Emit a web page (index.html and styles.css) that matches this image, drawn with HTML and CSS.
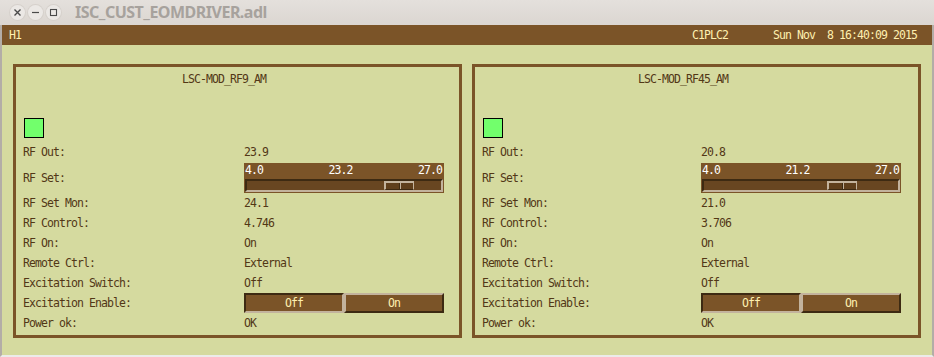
FILE: index.html
```html
<!DOCTYPE html>
<html>
<head>
<meta charset="utf-8">
<title>ISC_CUST_EOMDRIVER.adl</title>
<link rel="stylesheet" href="styles.css">
</head>
<body>
<div class="window">
  <div class="titlebar">
    <div class="wbtns">
      <span class="wbtn"><svg width="15" height="15" viewBox="0 0 15 15"><path d="M4.5 4.5 L10.5 10.5 M10.5 4.5 L4.5 10.5" stroke="#4a4a4a" stroke-width="1.4" fill="none"/></svg></span>
      <span class="wbtn"><svg width="15" height="15" viewBox="0 0 15 15"><path d="M4 7.5 H11" stroke="#4a4a4a" stroke-width="1.2" fill="none"/></svg></span>
      <span class="wbtn"><svg width="15" height="15" viewBox="0 0 15 15"><rect x="4.5" y="4.5" width="6" height="6" stroke="#4a4a4a" stroke-width="1.1" fill="none"/></svg></span>
    </div>
    <div class="wtitle">ISC_CUST_EOMDRIVER.adl</div>
  </div>
  <div class="frame">
    <div class="header">
      <span class="hname">H1</span>
      <span class="hspacer"></span>
      <span class="hhost">C1PLC2</span>
      <span class="hdate">Sun Nov  8 16:40:09 2015</span>
    </div>
    <div class="content">
      <div class="panel">
        <div class="ptitle">LSC-MOD_RF9_AM</div>
        <div class="led"></div>
        <div class="rows">
          <div class="row"><span>RF Out:</span><span>23.9</span></div>
          <div class="row row-slider"><span>RF Set:</span>
            <div class="slider">
              <div class="slabels"><span>4.0</span><span>23.2</span><span>27.0</span></div>
              <div class="trough"><div class="thumb" style="margin-left:137px"><span></span><span></span></div></div>
            </div>
          </div>
          <div class="row"><span>RF Set Mon:</span><span>24.1</span></div>
          <div class="row"><span>RF Control:</span><span>4.746</span></div>
          <div class="row"><span>RF On:</span><span>On</span></div>
          <div class="row"><span>Remote Ctrl:</span><span>External</span></div>
          <div class="row"><span>Excitation Switch:</span><span>Off</span></div>
          <div class="row"><span>Excitation Enable:</span>
            <div class="toggle"><span class="btn pressed">Off</span><span class="btn raised">On</span></div>
          </div>
          <div class="row"><span>Power ok:</span><span>OK</span></div>
        </div>
      </div>
      <div class="panel panel-right">
        <div class="ptitle">LSC-MOD_RF45_AM</div>
        <div class="led"></div>
        <div class="rows">
          <div class="row"><span>RF Out:</span><span>20.8</span></div>
          <div class="row row-slider"><span>RF Set:</span>
            <div class="slider">
              <div class="slabels"><span>4.0</span><span>21.2</span><span>27.0</span></div>
              <div class="trough"><div class="thumb" style="margin-left:123px"><span></span><span></span></div></div>
            </div>
          </div>
          <div class="row"><span>RF Set Mon:</span><span>21.0</span></div>
          <div class="row"><span>RF Control:</span><span>3.706</span></div>
          <div class="row"><span>RF On:</span><span>On</span></div>
          <div class="row"><span>Remote Ctrl:</span><span>External</span></div>
          <div class="row"><span>Excitation Switch:</span><span>Off</span></div>
          <div class="row"><span>Excitation Enable:</span>
            <div class="toggle"><span class="btn pressed">Off</span><span class="btn raised">On</span></div>
          </div>
          <div class="row"><span>Power ok:</span><span>OK</span></div>
        </div>
      </div>
    </div>
  </div>
</div>
</body>
</html>
```
FILE: styles.css
```css
* { box-sizing: border-box; }
html, body { margin: 0; padding: 0; }
body { width: 934px; height: 357px; overflow: hidden; background: #e9e7e4; }

.window { width: 934px; height: 357px; display: flex; flex-direction: column; }

.titlebar {
  height: 25px;
  display: flex;
  align-items: center;
  background: linear-gradient(#e4e0dc, #dbd6d1);
  padding-left: 10px;
}
.wbtns { display: flex; gap: 3px; }
.wbtn {
  width: 15px; height: 15px;
  border-radius: 50%;
  background: #ebe8e5;
  box-shadow: 0 0 0 1px #d6d1cc;
  display: flex;
}
.wtitle {
  margin-left: 14px;
  font-family: "Noto Sans", "DejaVu Sans", sans-serif;
  font-weight: bold;
  font-size: 16px;
  color: #a7a29d;
  letter-spacing: -0.5px;
  line-height: 25px;
}

.frame {
  flex: 1;
  display: flex;
  flex-direction: column;
  border-left: 2px solid #b3ada7;
  border-right: 2px solid #b3ada7;
  border-bottom: 2px solid #ecebe9;
  background: #d5da9f;
  font-family: "DejaVu Sans Mono", "Liberation Mono", monospace;
  font-size: 11.5px;
  letter-spacing: -0.92px;
}

.header {
  height: 20px;
  background: #7b5428;
  color: #fff0b0;
  display: flex;
  align-items: center;
  padding: 0 15px 0 7px;
  white-space: pre;
  line-height: 20px;
}
.hspacer { flex: 1; }
.hhost { margin-right: 45px; }

.content {
  display: flex;
  gap: 10px;
  padding: 19px 11px 0 11px;
}

.panel {
  width: 449px;
  height: 274px;
  border: 3px solid #7b5428;
  color: #523716;
  display: flex;
  flex-direction: column;
}
.ptitle {
  width: 416px;
  margin-top: 6px;
  text-align: center;
  line-height: 13px;
  height: 13px;
}
.led {
  width: 20px; height: 20px;
  margin: 32px 0 0 8px;
  border: 1px solid #000;
  background: #72ff6c;
}
.rows { margin-top: 4px; display: flex; flex-direction: column; }
.row {
  display: grid;
  grid-template-columns: 221px 200px;
  align-items: center;
  padding-left: 7px;
  height: 20px;
  line-height: 20px;
  white-space: pre;
}
.panel-right .row { grid-template-columns: 219px 200px; }
.row-slider { height: 30px; margin-top: 1px; }

.slider {
  width: 200px;
  height: 30px;
  background: #7b5428;
  padding: 0 1px 1px 1px;
  display: flex;
  flex-direction: column;
}
.slabels {
  height: 16px;
  line-height: 15px;
  display: flex;
  justify-content: space-between;
  color: #ffffff;
  padding: 0 1px 0 0;
}
.trough {
  height: 13px;
  border-style: solid;
  border-width: 2px;
  border-color: #3d2a12 #c3b39d #c3b39d #3d2a12;
  background: #684621;
  display: flex;
}
.thumb {
  width: 30px;
  height: 9px;
  display: flex;
  border-style: solid;
  border-width: 2px 1px 1px 2px;
  border-color: #c3b39d #c3b39d #3d2a12 #c3b39d;
  background: #5f3f1c;
}
.thumb span { flex: 1; }
.thumb span:first-child { border-right: 1px solid #3d2a12; }
.thumb span:last-child { border-left: 1px solid #c3b39d; }

.toggle { display: flex; width: 200px; height: 20px; }
.btn {
  flex: 1;
  border-style: solid;
  border-width: 2px;
  background: #7b5428;
  color: #fff0b0;
  text-align: center;
  line-height: 16px;
}
.btn.pressed { border-color: #3d2a12 #c3b39d #c3b39d #3d2a12; }
.btn.raised { border-color: #c3b39d #3d2a12 #3d2a12 #c3b39d; }
```
